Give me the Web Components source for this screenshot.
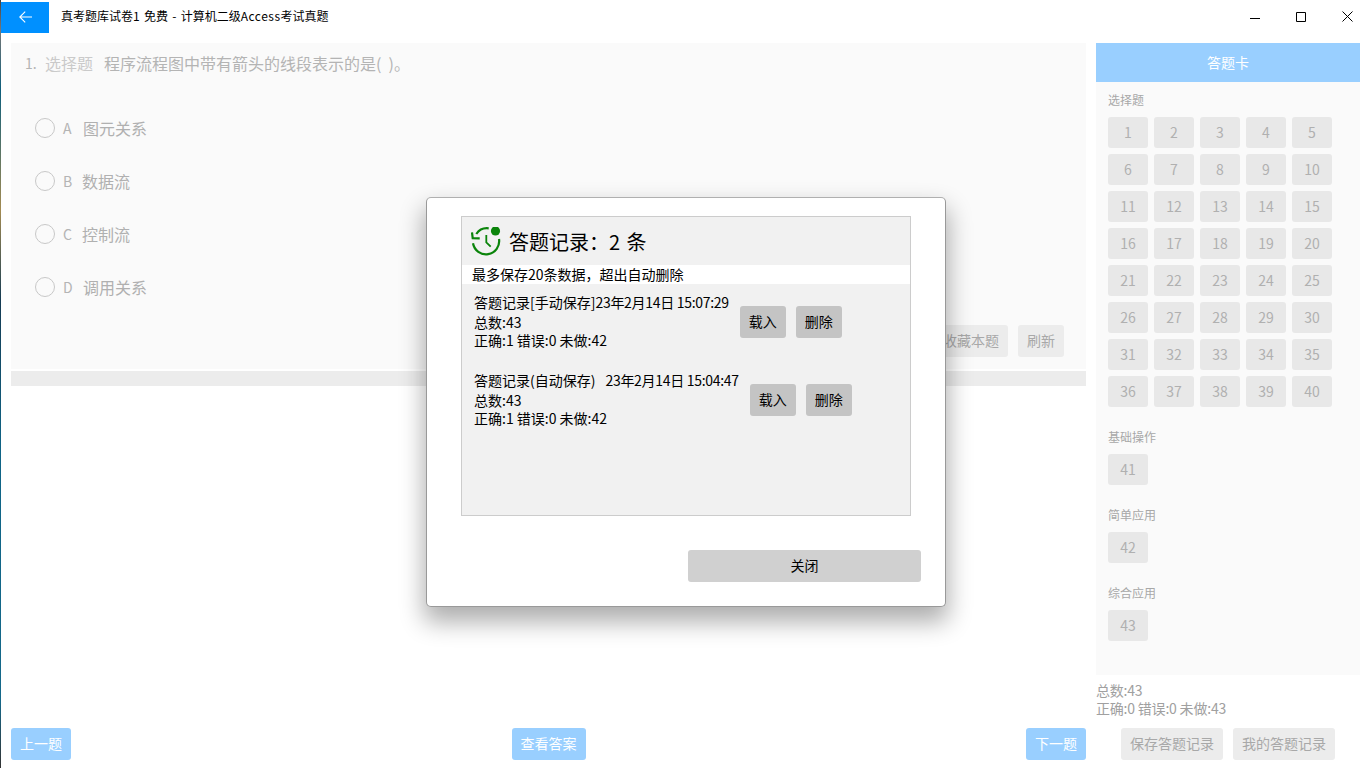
<!DOCTYPE html>
<html lang="zh">
<head>
<meta charset="utf-8">
<title>真考题库试卷1</title>
<style>
    html, body { margin: 0; height: 100%; overflow: hidden; background: #fff; }
    body { font-family: "Noto Sans CJK SC", sans-serif; }
</style>
</head>
<body>
<exam-app></exam-app>
<script>
const FONT = `"Noto Sans CJK SC", sans-serif`;

class ActionButton extends HTMLElement {
    constructor() {
        super();
        this.attachShadow({ mode: 'open' });
        this.shadowRoot.innerHTML = `
            <style>
                :host {
                    display: flex;
                    align-items: center;
                    justify-content: center;
                    height: var(--btn-h, 32px);
                    width: var(--btn-w, auto);
                    padding: 0 var(--btn-pad, 9px) 2px;
                    box-sizing: border-box;
                    border-radius: 3px;
                    background: var(--btn-bg, #ececec);
                    color: var(--btn-fg, #a8a8a8);
                    font-size: var(--btn-size, 14px);
                    line-height: 20px;
                    white-space: nowrap;
                    flex: none;
                }
                :host([kind="blue"]) { background: #99cfff; color: #fff; }
                :host([kind="dark"]) { background: #c4c4c4; color: #000; }
            </style>
            <slot></slot>
        `;
    }
}

class TitleBar extends HTMLElement {
    constructor() {
        super();
        this.attachShadow({ mode: 'open' });
        this.shadowRoot.innerHTML = `
            <style>
                :host {
                    display: flex;
                    height: 33px;
                    align-items: stretch;
                    font-size: 12px;
                    color: #000;
                }
                .back {
                    width: 48px;
                    margin-top: 2px;
                    background: #0090ff;
                    display: flex;
                    align-items: center;
                    justify-content: center;
                    margin-right: 12px;
                    padding-bottom: 2px;
                    box-sizing: border-box;
                }
                .title { flex: 1; line-height: 32px; word-spacing: 1.6px; }
                ::slotted(span) { letter-spacing: .5px; }
                .ctl { display: flex; width: 138px; margin-right: -4px; }
                .ctl span { width: 46px; height: 33px; display: flex; align-items: center; justify-content: center; }
            </style>
            <div class="back">
                <svg width="13" height="12" viewBox="0 0 13 12" fill="none" stroke="#fff" stroke-width="1.1">
                    <path d="M13 6H1M6.2.6.8 6l5.4 5.4"/>
                </svg>
            </div>
            <div class="title"><slot></slot></div>
            <div class="ctl">
                <span><svg width="10" height="10" viewBox="0 0 10 10"><path d="M0 6.5h10" stroke="#000" fill="none"/></svg></span>
                <span><svg width="10" height="10" viewBox="0 0 10 10"><path d="M.5.5h9v9h-9z" stroke="#000" fill="none"/></svg></span>
                <span><svg width="11" height="11" viewBox="0 0 11 11"><path d="M.5.5l10 10M10.5.5l-10 10" stroke="#000" fill="none"/></svg></span>
            </div>
        `;
    }
}

class QuizOption extends HTMLElement {
    constructor() {
        super();
        this.attachShadow({ mode: 'open' });
        const letter = this.getAttribute('letter') || 'A';
        const pad = this.getAttribute('pad') || '20';
        this.shadowRoot.innerHTML = `
            <style>
                :host {
                    display: flex;
                    align-items: center;
                    height: 53px;
                    color: #b0b0b0;
                    font-size: 16px;
                }
                i {
                    width: 20px;
                    height: 20px;
                    box-sizing: border-box;
                    border: 1px solid #c8c8c8;
                    border-radius: 50%;
                    margin-right: 8px;
                }
                b { font-weight: 400; font-size: 14px; width: ${pad}px; color: #b4b4b4; }
            </style>
            <i></i><b>${letter}</b><span><slot></slot></span>
        `;
    }
}

class QuestionPanel extends HTMLElement {
    constructor() {
        super();
        this.attachShadow({ mode: 'open' });
        this.shadowRoot.innerHTML = `
            <style>
                :host {
                    display: flex;
                    flex-direction: column;
                    height: 326px;
                    background: #fafafa;
                    box-sizing: border-box;
                    padding: 8px 22px 12px 14px;
                }
                .q { display: flex; line-height: 24px; font-size: 16px; color: #b4b4b4; }
                .n { width: 20px; font-size: 14px; }
                .t { width: 59px; color: #cacaca; }
                .opts { margin: 26px 0 0 10px; flex: 1; }
                .foot { display: flex; justify-content: flex-end; gap: 10px; }
            </style>
            <div class="q"><span class="n">1.</span><span class="t">选择题</span><span>程序流程图中带有箭头的线段表示的是( &nbsp;)。</span></div>
            <div class="opts">
                <quiz-option letter="A">图元关系</quiz-option>
                <quiz-option letter="B" pad="19">数据流</quiz-option>
                <quiz-option letter="C" pad="19">控制流</quiz-option>
                <quiz-option letter="D">调用关系</quiz-option>
            </div>
            <div class="foot">
                <action-button>收藏本题</action-button>
                <action-button>刷新</action-button>
            </div>
        `;
    }
}

class NumberGroup extends HTMLElement {
    constructor() {
        super();
        this.attachShadow({ mode: 'open' });
        const from = Number(this.getAttribute('from') || 1);
        const to = Number(this.getAttribute('to') || from);
        let cells = '';
        for (let i = from; i <= to; i++) cells += `<span>${i}</span>`;
        this.shadowRoot.innerHTML = `
            <style>
                :host { display: block; margin-bottom: 20px; }
                h4 { margin: 0 0 7px; font-weight: 400; font-size: 12px; line-height: 20px; color: #a8a8a8; }
                div { display: grid; grid-template-columns: repeat(5, 40px); gap: 6px; }
                span {
                    height: 31px;
                    line-height: 31px;
                    text-align: center;
                    background: #e8e8e8;
                    border-radius: 3px;
                    color: #b0b0b0;
                    font-size: 14px;
                }
            </style>
            <h4>${this.getAttribute('label') || ''}</h4>
            <div>${cells}</div>
        `;
    }
}

class AnswerCard extends HTMLElement {
    constructor() {
        super();
        this.attachShadow({ mode: 'open' });
        this.shadowRoot.innerHTML = `
            <style>
                :host { display: flex; flex-direction: column; height: 632px; background: #fafafa; }
                header {
                    height: 39px;
                    line-height: 39px;
                    background: #99cfff;
                    color: #fff;
                    text-align: center;
                    font-size: 14px;
                    flex: none;
                }
                .body { padding: 8px 12px 0; }
            </style>
            <header>答题卡</header>
            <div class="body">
                <number-group label="选择题" from="1" to="40"></number-group>
                <number-group label="基础操作" from="41" to="41"></number-group>
                <number-group label="简单应用" from="42" to="42"></number-group>
                <number-group label="综合应用" from="43" to="43"></number-group>
            </div>
        `;
    }
}

class RecordItem extends HTMLElement {
    constructor() {
        super();
        this.attachShadow({ mode: 'open' });
        const gap = this.getAttribute('gap') || '0';
        this.shadowRoot.innerHTML = `
            <style>
                :host { display: flex; align-items: center; height: 60px; font-size: 14px; line-height: 18px; color: #000; }
                .txt { margin: -2px 11px 0 0; white-space: nowrap; }
                .txt div:first-child { margin-bottom: 2px; }
                .when { letter-spacing: -.3px; margin-left: ${gap}px; }
                .btns { display: flex; gap: 10px; --btn-w: 46px; --btn-pad: 0; }
            </style>
            <div class="txt">
                <div>${this.getAttribute('name')}<span class="when">${this.getAttribute('when')}</span></div>
                <div>总数:43</div>
                <div>正确:1 错误:0 未做:42</div>
            </div>
            <div class="btns">
                <action-button kind="dark">载入</action-button>
                <action-button kind="dark">删除</action-button>
            </div>
        `;
    }
}

class RecordDialog extends HTMLElement {
    constructor() {
        super();
        this.attachShadow({ mode: 'open' });
        this.shadowRoot.innerHTML = `
            <style>
                :host {
                    position: absolute;
                    left: 425px;
                    top: 197px;
                    width: 520px;
                    height: 410px;
                    box-sizing: border-box;
                    padding: 18px 24px 24px 34px;
                    display: flex;
                    flex-direction: column;
                    background: #fff;
                    border: 1px solid #999;
                    border-top-color: #b0b0b0;
                    border-radius: 5px;
                    box-shadow: 0 13px 24px 2px rgba(0, 0, 0, .32);
                    color: #000;
                }
                .box {
                    width: 450px;
                    height: 300px;
                    box-sizing: border-box;
                    border: 1px solid #ccc;
                    background: #f1f1f1;
                    flex: none;
                }
                .head { display: flex; align-items: center; height: 48px; padding: 2px 0 0 9px; box-sizing: border-box; }
                .head svg { margin-right: 8px; }
                h2 { margin: 0 0 1px; font-weight: 400; font-size: 20px; line-height: 28px; word-spacing: 2px; }
                .note { background: #fff; height: 19px; line-height: 19px; padding-left: 10px; font-size: 14px; }
                .list { padding: 8px 0 0 12px; display: flex; flex-direction: column; gap: 18px; }
                .foot { margin-top: auto; display: flex; justify-content: flex-end; --btn-w: 233px; --btn-bg: #d0d0d0; --btn-fg: #000; }
            </style>
            <div class="box">
                <div class="head">
                    <svg width="30" height="30" viewBox="0 0 30 30" fill="none" stroke="#0a840a" stroke-width="2.2">
                        <path d="M17.7 1.3A13 13 0 0 0 5.3 7"/>
                        <path d="M28 12A13 13 0 0 1 2 16.3"/>
                        <path d="M1 5.3l.7 5.8 7 .2"/>
                        <path d="M15.3 8v7.3l4.4 4.4" stroke-width="1.8"/>
                        <circle cx="24.5" cy="4" r="4.6" fill="#0a840a" stroke="none"/>
                    </svg>
                    <h2>答题记录：2 条</h2>
                </div>
                <div class="note">最多保存20条数据，超出自动删除</div>
                <div class="list">
                    <record-item name="答题记录[手动保存]" when="23年2月14日 15:07:29"></record-item>
                    <record-item name="答题记录(自动保存)" gap="10" when="23年2月14日 15:04:47"></record-item>
                </div>
            </div>
            <div class="foot"><action-button>关闭</action-button></div>
        `;
    }
}

class ExamApp extends HTMLElement {
    constructor() {
        super();
        this.attachShadow({ mode: 'open' });
        this.shadowRoot.innerHTML = `
            <style>
                :host {
                    display: flex;
                    flex-direction: column;
                    position: relative;
                    height: 768px;
                    box-sizing: border-box;
                    border-left: 1px solid transparent;
                    background: #fff;
                    font-family: ${FONT};
                }
                .strip {
                    position: absolute; left: -1px; top: 0; bottom: 0; width: 1px;
                    background: linear-gradient(#444 0, #777 30px, #0f5f7c 90px, #a38b52 210px, #163c54 300px, #0f6486 450px, #15688a 700px, #333 768px);
                }
                main {
                    flex: 1;
                    display: flex;
                    gap: 10px;
                    padding: 10px 6px 8px 10px;
                    min-height: 0;
                }
                .left { width: 1075px; display: flex; flex-direction: column; }
                .bar { height: 15px; margin-top: 2px; background: #ececec; }
                .nav { margin-top: auto; display: flex; justify-content: space-between; }
                .right { flex: 1; display: flex; flex-direction: column; }
                .stats { margin-top: 6px; font-size: 14px; line-height: 18px; color: #a0a0a0; letter-spacing: -.2px; }
                .acts { margin-top: auto; display: flex; gap: 10px; padding-left: 25px; --btn-w: 102px; --btn-pad: 0; }
                .nav action-button:first-child, .nav action-button:last-child { --btn-w: 60px; --btn-pad: 0; }
                .nav action-button:nth-child(2) { --btn-w: 74px; --btn-pad: 0; }
            </style>
            <div class="strip"></div>
            <title-bar>真考题库试卷1 免费 - 计算机二级<span>Access</span>考试真题</title-bar>
            <main>
                <div class="left">
                    <question-panel></question-panel>
                    <div class="bar"></div>
                    <div class="nav">
                        <action-button kind="blue">上一题</action-button>
                        <action-button kind="blue">查看答案</action-button>
                        <action-button kind="blue">下一题</action-button>
                    </div>
                </div>
                <div class="right">
                    <answer-card></answer-card>
                    <div class="stats">总数:43<br>正确:0 错误:0 未做:43</div>
                    <div class="acts">
                        <action-button>保存答题记录</action-button>
                        <action-button>我的答题记录</action-button>
                    </div>
                </div>
            </main>
            <record-dialog></record-dialog>
        `;
    }
}

customElements.define('action-button', ActionButton);
customElements.define('title-bar', TitleBar);
customElements.define('quiz-option', QuizOption);
customElements.define('question-panel', QuestionPanel);
customElements.define('number-group', NumberGroup);
customElements.define('answer-card', AnswerCard);
customElements.define('record-item', RecordItem);
customElements.define('record-dialog', RecordDialog);
customElements.define('exam-app', ExamApp);
</script>
</body>
</html>
